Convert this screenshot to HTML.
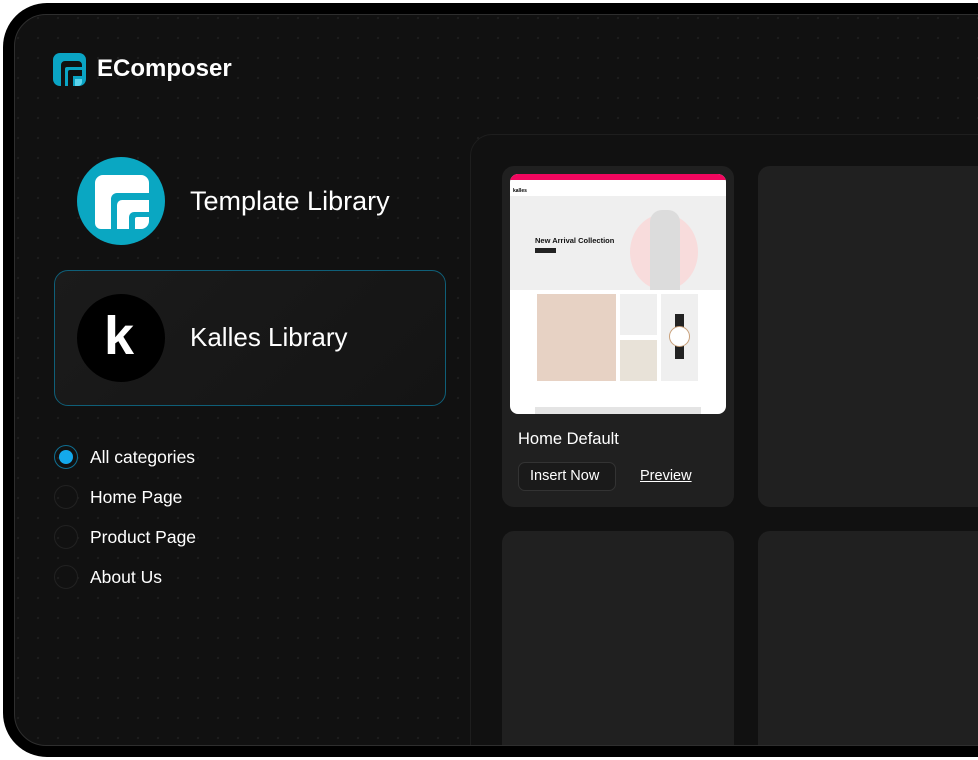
<!DOCTYPE html>
<html><head><meta charset="utf-8"><style>
*{margin:0;padding:0;box-sizing:border-box}
html,body{width:978px;height:760px;overflow:hidden}
body{background:#fff;font-family:"Liberation Sans",sans-serif;position:relative}
.outer{position:absolute;left:3px;top:3px;width:1100px;height:754px;background:#000;border-radius:44px}
.inner{position:absolute;left:14px;top:14px;width:1100px;height:732px;background:#111;border:1px solid #2e2e2e;border-radius:32px;overflow:hidden;
background-image:radial-gradient(circle,#1e1e1e 1px,transparent 1.3px);background-size:20px 20px;background-position:13px 13px}
.abs{position:absolute}
.t{color:#fff;position:absolute;white-space:nowrap}
.panel{position:absolute;left:455px;top:119px;width:700px;height:700px;border:1px solid #1e1e1e;border-radius:22px;background:#111}
.card{position:absolute;background:#202020;border-radius:12px}
.radio{position:absolute;left:39px;width:24px;height:24px;border-radius:50%;border:1px solid #222}
</style></head><body>
<div class="outer"></div>
<div class="inner">
  <svg class="abs" style="left:38px;top:38px" width="33" height="33" viewBox="0 0 33 33">
    <rect width="33" height="33" rx="7" fill="#0aa4c4"/>
    <path d="M8 33V12a4 4 0 0 1 4-4h13a4 4 0 0 1 4 4v2H14a2 2 0 0 0-2 2v17z" fill="#111"/>
    <path d="M15 33V19a2 2 0 0 1 2-2h12v6H20v10z" fill="#111"/>
    <path d="M22 33v-7h7v3a4 4 0 0 1-4 4z" fill="#5dd3ec"/>
  </svg>
  <div class="t" style="left:82px;top:40px;font-size:24px;font-weight:bold">EComposer</div>

  <div class="abs" style="left:62px;top:142px;width:88px;height:88px;border-radius:50%;background:#0aa7c2"></div>
  <svg class="abs" style="left:80px;top:160px" width="54" height="54" viewBox="0 0 54 54">
    <path d="M0 48V8a8 8 0 0 1 8-8h38a8 8 0 0 1 8 8v10H22a6 6 0 0 0-6 6v30H6a6 6 0 0 1-6-6z" fill="#fff"/>
    <path d="M22 54V30a5 5 0 0 1 5-5h27v12H39a5 5 0 0 0-5 5v12z" fill="#fff"/>
    <path d="M40 54V44a2 2 0 0 1 2-2h12v4a8 8 0 0 1-8 8z" fill="#fff"/>
  </svg>
  <div class="t" style="left:175px;top:171px;font-size:27px">Template Library</div>

  <div class="abs" style="left:39px;top:255px;width:392px;height:136px;border:1px solid #0f5f78;border-radius:14px;background:linear-gradient(135deg,#1b1b1b,#141414)"></div>
  <div class="abs" style="left:62px;top:279px;width:88px;height:88px;border-radius:50%;background:#000"></div>
  <div class="t" style="left:89px;top:290px;font-size:54px;font-weight:bold">k</div>
  <div class="t" style="left:175px;top:307px;font-size:26px">Kalles Library</div>

  <div class="radio" style="top:430px;border:1px solid #0f6f92"><div class="abs" style="left:4px;top:4px;width:14px;height:14px;border-radius:50%;background:#14a9ec"></div></div>
  <div class="t" style="left:75px;top:432px;font-size:17.5px">All categories</div>
  <div class="radio" style="top:470px"></div>
  <div class="t" style="left:75px;top:472px;font-size:17.5px">Home Page</div>
  <div class="radio" style="top:510px"></div>
  <div class="t" style="left:75px;top:512px;font-size:17.5px">Product Page</div>
  <div class="radio" style="top:550px"></div>
  <div class="t" style="left:75px;top:552px;font-size:17.5px">About Us</div>

  <div class="panel"></div>
  <div class="card" style="left:487px;top:151px;width:232px;height:341px">
    <div class="abs" style="left:8px;top:8px;width:216px;height:240px;background:#fff;border-radius:8px;overflow:hidden">
      <div class="abs" style="left:0;top:0;width:216px;height:6px;background:#f2075f"></div>
      <div class="abs" style="left:3px;top:14px;font-size:5px;font-weight:bold;color:#000">kalles</div>
      <div class="abs" style="left:0;top:22px;width:216px;height:94px;background:#efefef"></div>
      <div class="abs" style="left:120px;top:40px;width:68px;height:76px;border-radius:50%;background:#f8dcdc"></div>
      <div class="abs" style="left:140px;top:36px;width:30px;height:80px;background:#dcdcdc;border-radius:12px 12px 0 0"></div>
      <div class="abs" style="left:25px;top:62px;font-size:7.5px;font-weight:bold;color:#111">New Arrival Collection</div>
      <div class="abs" style="left:25px;top:74px;width:21px;height:5px;background:#222"></div>
      <div class="abs" style="left:27px;top:120px;width:79px;height:87px;background:#e7d2c4"></div>
      <div class="abs" style="left:110px;top:120px;width:37px;height:41px;background:#efefef"></div>
      <div class="abs" style="left:110px;top:166px;width:37px;height:41px;background:#e8e2d8"></div>
      <div class="abs" style="left:151px;top:120px;width:37px;height:87px;background:#efefef"></div>
      <div class="abs" style="left:165px;top:140px;width:9px;height:45px;background:#222"></div>
      <div class="abs" style="left:159px;top:152px;width:21px;height:21px;border-radius:50%;background:#fff;border:1px solid #c9a07a"></div>
      <div class="abs" style="left:25px;top:233px;width:166px;height:7px;background:#e4e4e4"></div>
    </div>
    <div class="t" style="left:16px;top:264px;font-size:16.5px">Home Default</div>
    <div class="abs" style="left:16px;top:296px;width:98px;height:29px;border:1px solid #333;border-radius:7px;background:#1a1a1a"></div>
    <div class="t" style="left:28px;top:302px;font-size:14.5px">Insert Now</div>
    <div class="t" style="left:138px;top:302px;font-size:14.5px;text-decoration:underline">Preview</div>
  </div>
  <div class="card" style="left:743px;top:151px;width:400px;height:341px"></div>
  <div class="card" style="left:487px;top:516px;width:232px;height:300px"></div>
  <div class="card" style="left:743px;top:516px;width:400px;height:300px"></div>
</div>
</body></html>
